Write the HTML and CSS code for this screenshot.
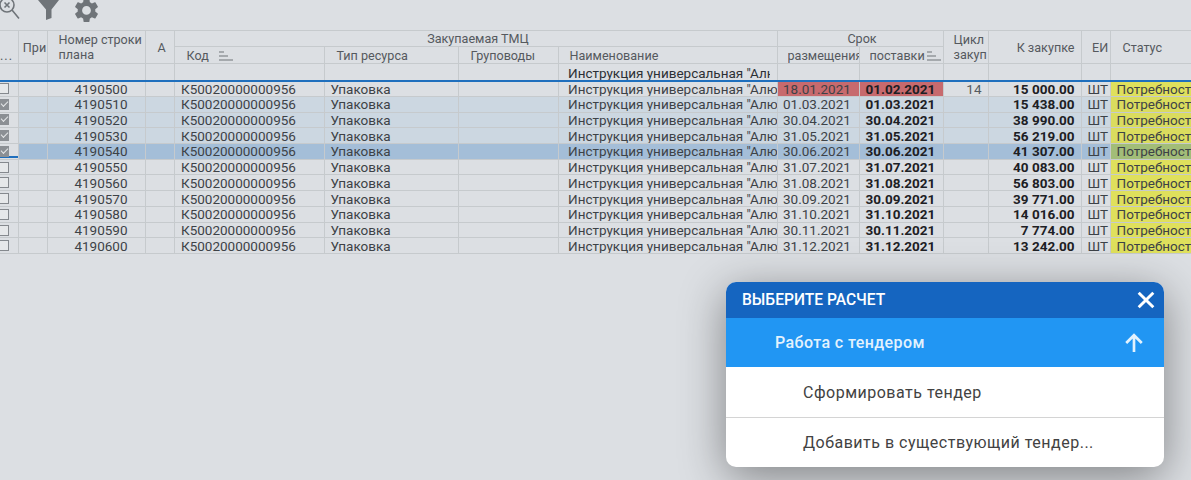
FILE: index.html
```html
<!DOCTYPE html>
<html lang="ru">
<head>
  <meta charset="UTF-8" />
  <title>Закупки</title>
  <link rel="stylesheet" href="styles.css">
</head>
<body>

<div class="toolbar">
  <svg class="icon-zoom" viewBox="0 0 20 20"><circle cx="7" cy="5" r="7" fill="none" stroke="#6f7479" stroke-width="1.6"/><path d="M12 10l7 8.5M4.5 2.5l5 5M9.5 2.5l-5 5" fill="none" stroke="#6f7479" stroke-width="1.6"/></svg>
  <svg class="icon-filter" viewBox="0 0 21 20"><path d="M0 0H21L13.5 9.5V18L8 20V9.5Z" fill="#6f7479"/></svg>
  <svg class="icon-gear" viewBox="2.6 3.5 18.8 18"><path fill="#6f7479" d="M19.14,12.94c0.04-0.3,0.06-0.61,0.06-0.94c0-0.32-0.02-0.64-0.07-0.94l2.03-1.58c0.18-0.14,0.23-0.41,0.12-0.61 l-1.92-3.32c-0.12-0.22-0.37-0.29-0.59-0.22l-2.39,0.96c-0.5-0.38-1.03-0.7-1.62-0.94L14.4,2.81c-0.04-0.24-0.24-0.41-0.48-0.41 h-3.84c-0.24,0-0.43,0.17-0.47,0.41L9.25,5.35C8.66,5.59,8.12,5.92,7.63,6.29L5.24,5.33c-0.22-0.08-0.47,0-0.59,0.22L2.74,8.87 C2.62,9.08,2.66,9.34,2.86,9.48l2.03,1.58C4.84,11.36,4.8,11.69,4.8,12s0.02,0.64,0.07,0.94l-2.03,1.58 c-0.18,0.14-0.23,0.41-0.12,0.61l1.92,3.32c0.12,0.22,0.37,0.29,0.59,0.22l2.39-0.96c0.5,0.38,1.03,0.7,1.62,0.94l0.36,2.54 c0.05,0.24,0.24,0.41,0.48,0.41h3.84c0.24,0,0.44-0.17,0.47-0.41l0.36-2.54c0.59-0.24,1.13-0.56,1.62-0.94l2.39,0.96 c0.22,0.08,0.47,0,0.59-0.22l1.92-3.32c0.12-0.22,0.07-0.47-0.12-0.61L19.14,12.94z M12,15.6c-1.98,0-3.6-1.62-3.6-3.6 s1.62-3.6,3.6-3.6s3.6,1.62,3.6,3.6S13.98,15.6,12,15.6z"/></svg>
</div>

<table class="grid">
  <colgroup>
    <col class="c-check"><col class="c-pri"><col class="c-num"><col class="c-a">
    <col class="c-code"><col class="c-type"><col class="c-group"><col class="c-name">
    <col class="c-place"><col class="c-supply"><col class="c-cycle"><col class="c-qty">
    <col class="c-unit"><col class="c-status">
  </colgroup>
  <thead>
    <tr class="head-top">
      <th rowspan="2" class="h-dots">...</th>
      <th rowspan="2" class="h-pri">При</th>
      <th rowspan="2" class="h-num">Номер строки плана</th>
      <th rowspan="2" class="h-a">А</th>
      <th colspan="4" class="h-goods">Закупаемая ТМЦ</th>
      <th colspan="2" class="h-term">Срок</th>
      <th rowspan="2" class="h-cycle">Цикл закуп</th>
      <th rowspan="2" class="h-qty">К закупке</th>
      <th rowspan="2" class="h-unit">ЕИ</th>
      <th rowspan="2" class="h-status">Статус</th>
    </tr>
    <tr class="head-sub">
      <th class="h-left">Код <svg class="sort" viewBox="0 0 14 10"><path d="M0 1h5M0 5h9M0 9h14" stroke="#6f7479" stroke-width="1.2"/></svg></th>
      <th class="h-left">Тип ресурса</th>
      <th class="h-left">Груповоды</th>
      <th class="h-name">Наименование</th>
      <th class="h-place"><div class="clip">размещения</div></th>
      <th class="h-supply"><div class="clip">поставки</div><svg class="sort" viewBox="0 0 14 10"><path d="M0 1h5M0 5h9M0 9h14" stroke="#6f7479" stroke-width="1.2"/></svg></th>
    </tr>
    <tr class="filter">
      <td></td><td></td><td></td><td></td><td></td><td></td><td></td>
      <td class="name"><div class="filter-name">Инструкция универсальная "Алю</div></td>
      <td></td><td></td><td></td><td></td><td></td><td></td>
    </tr>
  </thead>
  <tbody>
    <tr><td class="chk"><span class="cb"></span></td><td></td><td class="num">4190500</td><td></td><td class="code">К50020000000956</td><td>Упаковка</td><td></td><td class="name"><div class="clip">Инструкция универсальная "Алю</div></td><td class="place late">18.01.2021</td><td class="supply late">01.02.2021</td><td class="cycle">14</td><td class="qty">15 000.00</td><td class="unit">ШТ</td><td class="status"><div class="clip">Потребность</div></td></tr>
    <tr class="sel"><td class="chk"><span class="cb on"></span></td><td></td><td class="num">4190510</td><td></td><td class="code">К50020000000956</td><td>Упаковка</td><td></td><td class="name"><div class="clip">Инструкция универсальная "Алю</div></td><td class="place">01.03.2021</td><td class="supply">01.03.2021</td><td></td><td class="qty">15 438.00</td><td class="unit">ШТ</td><td class="status"><div class="clip">Потребность</div></td></tr>
    <tr class="sel"><td class="chk"><span class="cb on"></span></td><td></td><td class="num">4190520</td><td></td><td class="code">К50020000000956</td><td>Упаковка</td><td></td><td class="name"><div class="clip">Инструкция универсальная "Алю</div></td><td class="place">30.04.2021</td><td class="supply">30.04.2021</td><td></td><td class="qty">38 990.00</td><td class="unit">ШТ</td><td class="status"><div class="clip">Потребность</div></td></tr>
    <tr class="sel"><td class="chk"><span class="cb on"></span></td><td></td><td class="num">4190530</td><td></td><td class="code">К50020000000956</td><td>Упаковка</td><td></td><td class="name"><div class="clip">Инструкция универсальная "Алю</div></td><td class="place">31.05.2021</td><td class="supply">31.05.2021</td><td></td><td class="qty">56 219.00</td><td class="unit">ШТ</td><td class="status"><div class="clip">Потребность</div></td></tr>
    <tr class="active"><td class="chk"><span class="cb on"></span></td><td></td><td class="num">4190540</td><td></td><td class="code">К50020000000956</td><td>Упаковка</td><td></td><td class="name"><div class="clip">Инструкция универсальная "Алю</div></td><td class="place">30.06.2021</td><td class="supply">30.06.2021</td><td></td><td class="qty">41 307.00</td><td class="unit">ШТ</td><td class="status"><div class="clip">Потребность</div></td></tr>
    <tr><td class="chk"><span class="cb"></span></td><td></td><td class="num">4190550</td><td></td><td class="code">К50020000000956</td><td>Упаковка</td><td></td><td class="name"><div class="clip">Инструкция универсальная "Алю</div></td><td class="place">31.07.2021</td><td class="supply">31.07.2021</td><td></td><td class="qty">40 083.00</td><td class="unit">ШТ</td><td class="status"><div class="clip">Потребность</div></td></tr>
    <tr><td class="chk"><span class="cb"></span></td><td></td><td class="num">4190560</td><td></td><td class="code">К50020000000956</td><td>Упаковка</td><td></td><td class="name"><div class="clip">Инструкция универсальная "Алю</div></td><td class="place">31.08.2021</td><td class="supply">31.08.2021</td><td></td><td class="qty">56 803.00</td><td class="unit">ШТ</td><td class="status"><div class="clip">Потребность</div></td></tr>
    <tr><td class="chk"><span class="cb"></span></td><td></td><td class="num">4190570</td><td></td><td class="code">К50020000000956</td><td>Упаковка</td><td></td><td class="name"><div class="clip">Инструкция универсальная "Алю</div></td><td class="place">30.09.2021</td><td class="supply">30.09.2021</td><td></td><td class="qty">39 771.00</td><td class="unit">ШТ</td><td class="status"><div class="clip">Потребность</div></td></tr>
    <tr><td class="chk"><span class="cb"></span></td><td></td><td class="num">4190580</td><td></td><td class="code">К50020000000956</td><td>Упаковка</td><td></td><td class="name"><div class="clip">Инструкция универсальная "Алю</div></td><td class="place">31.10.2021</td><td class="supply">31.10.2021</td><td></td><td class="qty">14 016.00</td><td class="unit">ШТ</td><td class="status"><div class="clip">Потребность</div></td></tr>
    <tr><td class="chk"><span class="cb"></span></td><td></td><td class="num">4190590</td><td></td><td class="code">К50020000000956</td><td>Упаковка</td><td></td><td class="name"><div class="clip">Инструкция универсальная "Алю</div></td><td class="place">30.11.2021</td><td class="supply">30.11.2021</td><td></td><td class="qty">7 774.00</td><td class="unit">ШТ</td><td class="status"><div class="clip">Потребность</div></td></tr>
    <tr><td class="chk"><span class="cb"></span></td><td></td><td class="num">4190600</td><td></td><td class="code">К50020000000956</td><td>Упаковка</td><td></td><td class="name"><div class="clip">Инструкция универсальная "Алю</div></td><td class="place">31.12.2021</td><td class="supply">31.12.2021</td><td></td><td class="qty">13 242.00</td><td class="unit">ШТ</td><td class="status"><div class="clip">Потребность</div></td></tr>
  </tbody>
</table>

<div class="dialog">
  <div class="dialog-head">
    <span>ВЫБЕРИТЕ РАСЧЕТ</span>
    <svg class="close" viewBox="0 0 16 16"><path d="M1.5 1.5l13 13M14.5 1.5l-13 13" stroke="#fff" stroke-width="2.6" fill="none"/></svg>
  </div>
  <div class="dialog-group">
    <span>Работа с тендером</span>
    <svg class="arrow" viewBox="0 0 18 18"><path d="M9 17V2M2 9l7-7 7 7" stroke="#e3f2fd" stroke-width="2.4" fill="none"/></svg>
  </div>
  <div class="dialog-item">Сформировать тендер</div>
  <div class="dialog-item">Добавить в существующий тендер...</div>
</div>

</body>
</html>
```

FILE: styles.css
```css
html, body { height: 100%; }
body {
  margin: 0; background: #dcdfe3; overflow: hidden;
  font-family: Roboto, "Liberation Sans", sans-serif; color: #3d4247;
}

.toolbar { display: flex; align-items: flex-start; height: 30px; }
.icon-zoom { width: 20px; height: 20px; }
.icon-filter { width: 21px; height: 20px; margin-left: 18px; }
.icon-gear { width: 23px; height: 22px; margin-left: 16px; }

.grid {
  table-layout: fixed; border-collapse: collapse;
  width: 1191px; font-size: 13.5px; line-height: 15px;
}
.c-check { width: 18px; } .c-pri { width: 29px; } .c-num { width: 98px; } .c-a { width: 29px; }
.c-code { width: 150px; } .c-type { width: 134px; } .c-group { width: 100px; } .c-name { width: 219px; }
.c-place { width: 82px; } .c-supply { width: 84px; } .c-cycle { width: 45px; } .c-qty { width: 93px; }
.c-unit { width: 29px; } .c-status { width: 81px; }

th, td {
  border: 1px solid #c6cacd; padding: 0 0 0 6px; white-space: nowrap;
  overflow: hidden; box-sizing: border-box;
}
th {
  font-weight: 400; font-size: 12.6px; line-height: 15px; color: #55595e;
  padding: 0; text-align: center; white-space: normal;
}
tr > :first-child { border-left: none; }
tr > :last-child { border-right: none; }

.head-top { height: 16px; }
.head-sub { height: 17px; }
.head-sub th { white-space: nowrap; }
.filter { height: 17px; }
.filter td { border-bottom: 2px solid #1f6fbd; color: #2c3035; line-height: 14px; vertical-align: bottom; }
.h-dots { vertical-align: bottom; text-align: left; letter-spacing: 1px; }
.h-pri { padding-left: 4px; }
.h-num { text-align: left; padding-left: 11px; }
.h-a { padding-left: 4px; }
.h-goods { padding-left: 5px; vertical-align: bottom; }
.h-term { padding-left: 4px; vertical-align: bottom; }
.h-cycle { text-align: left; padding-left: 10px; }
.h-qty { text-align: right; padding-right: 6px; }
.h-unit { padding-left: 9px; }
.h-status { text-align: left; padding-left: 12px; }
.h-left { text-align: left; padding-left: 12px; }
.h-name { text-align: left; padding-left: 11px; }
.h-place { text-align: left; padding-left: 10px; }
.h-supply { text-align: left; padding-left: 10px; }
.h-supply .clip { display: inline-block; width: 55px; vertical-align: middle; }
.sort { width: 14px; height: 10px; margin-left: 7px; vertical-align: -1px; }
.h-supply .sort { margin-left: 2px; vertical-align: middle; }

.clip { overflow: hidden; white-space: nowrap; }
.filter-name { width: 202px; overflow: hidden; white-space: nowrap; }

tbody tr { height: 15.73px; }
tbody td { line-height: 14px; }
.chk { padding: 0; }
.num { text-align: center; padding: 0 0 0 10px; }
.code { padding-left: 6.5px; }
.name { padding-left: 9.5px; }
td.place { padding-left: 5.5px; }
td.supply { font-weight: 700; color: #1d2024; }
.qty { font-weight: 700; text-align: right; padding: 0 6px 0 0; color: #1d2024; }
.cycle { text-align: right; padding: 0 6px 0 0; color: #555a60; }
.status { background: #dfe05c; }

.sel td { background: #ccd7e1; }
.sel .status { background: #dadc5e; }
.active td { background: #a4bed8; }
.active .chk { background: #dcdfe3; box-shadow: inset 0 -1px #dcdfe3, inset 0 -3px #1f6fbd; }
.active .status { background: #a2bd78; }
.sel .chk { background: #dcdfe3; }
td.late { background: #c76a6e; }

.cb {
  display: block; position: relative; width: 11px; height: 9px; margin-left: -4px;
  border: 1px solid #85898e; background: #e6e8ea; box-sizing: content-box;
}
.cb.on { background: #8b8f94; border-color: #8b8f94; }
.cb.on::after {
  content: ""; position: absolute; left: 4px; top: 1px; width: 6px; height: 3px;
  border-left: 1px solid #e4e6e8; border-bottom: 1px solid #e4e6e8;
  transform: rotate(-45deg);
}

.dialog {
  position: absolute; left: 726px; top: 282px; width: 438px; height: 185px;
  border-radius: 10px; overflow: hidden; background: #fff;
  box-shadow: 0 10px 46px rgba(0, 0, 0, .42);
}
.dialog-head {
  display: flex; align-items: center; justify-content: space-between;
  height: 36px; padding: 0 9px 0 16px; box-sizing: border-box;
  background: #1565c0; color: #fff; font-size: 15.6px; font-weight: 500;
}
.close { width: 18px; height: 18px; }
.dialog-group {
  display: flex; align-items: center; justify-content: space-between;
  height: 49px; padding: 0 20px 0 49px; box-sizing: border-box;
  background: #2196f3; color: #e3f2fd; font-size: 16px; font-weight: 500; letter-spacing: .4px;
}
.arrow { width: 20px; height: 20px; }
.dialog-item {
  display: flex; align-items: center; height: 50px; padding-left: 77px;
  box-sizing: border-box; font-size: 16px; letter-spacing: .5px; color: #424242;
}
.dialog-item + .dialog-item { border-top: 1px solid #d4d4d4; }
```
